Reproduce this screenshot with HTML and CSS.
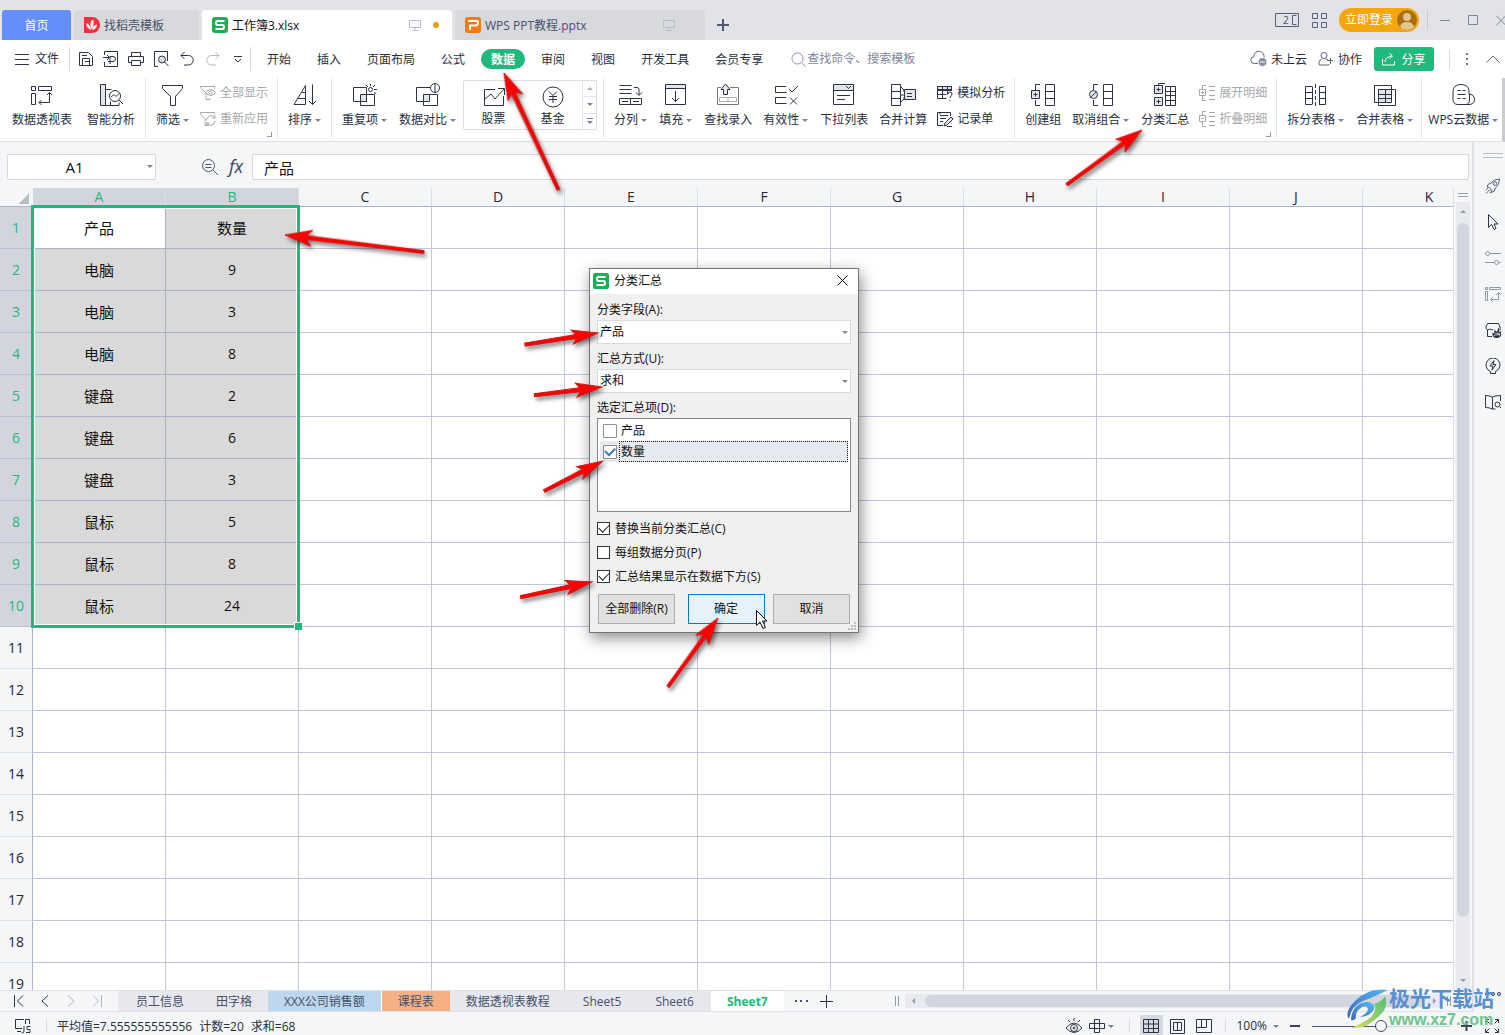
FILE: index.html
```html
<!DOCTYPE html>
<html lang="zh-CN">
<head>
<meta charset="utf-8">
<title>工作簿3.xlsx</title>
<link rel="stylesheet" href="styles.css">
</head>
<body>
<div class="app">
<header class="titlebar">
  <nav class="doc-tabs">
    <button class="doc-tab home"><span>首页</span></button>
    <button class="doc-tab tpl"><svg width="16" height="16" viewBox="0 0 16 16"><path d="M0 0h8a8 8 0 0 1 0 16H0z" fill="#f8303c"/><path d="M7 13C3 11 2 8 2.500 6 5 7 6.500 9 7 13zM7.500 12C5.500 8 6.500 4 9 2.500c1.500 3 .5 6.500-1.500 9.500zM8 13c0-3 2-5 5-5.500 0 3-2 5-5 5.500z" fill="#fff"/></svg><span>找稻壳模板</span></button>
    <button class="doc-tab file active"><svg width="16" height="16" viewBox="0 0 16 16"><rect width="16" height="16" rx="3" fill="#1cb050"/><path d="M12.500 4H5.500Q4 4 4 6t1.500 2h5Q12 8 12 10t-1.500 2H3.500" fill="none" stroke="#fff" stroke-width="2"/></svg><span>工作簿3.xlsx</span><svg class="monitor" width="12" height="12" viewBox="0 0 12 12"><path d="M.5 1.500h11v7H.5zM6 9v2M3 11.500h6"/></svg><i class="dot"></i></button>
    <button class="doc-tab file ppt"><svg width="16" height="16" viewBox="0 0 16 16"><rect width="16" height="16" rx="3" fill="#f47a14"/><path d="M3 4h8.500q1.500 0 1.500 2t-1.500 2.500H5V13" fill="none" stroke="#fff" stroke-width="2"/></svg><span>WPS PPT教程.pptx</span><svg class="monitor" width="12" height="12" viewBox="0 0 12 12"><path d="M.5 1.500h11v7H.5zM6 9v2M3 11.500h6"/></svg></button>
    <button class="new-tab" aria-label="新建"><svg width="12" height="12" viewBox="0 0 12 12"><path d="M6 0v12M0 6h12" stroke="#4a5a7a" stroke-width="2"/></svg></button>
  </nav>
  <div class="win-tools">
    <svg width="25" height="15" viewBox="0 0 25 15"><path d="M.5.5h23v13H.5zM21.500 2.500h-4v9h4"/><text x="8" y="11">2</text></svg>
    <svg width="15" height="15" viewBox="0 0 15 15"><path d="M.5.5h5v5h-5zM9.500.5h5v5h-5zM.5 9.500h5v5h-5zM9.500 9.500h5v5h-5z"/></svg>
    <button class="login"><span>立即登录</span><svg width="20" height="20" viewBox="0 0 20 20"><circle cx="10" cy="10" r="10" fill="#a8700c"/><circle cx="10" cy="7" r="4" fill="#e3c592"/><path d="M3 17q1-5 7-5t7 5q-3 3-7 3t-7-3z" fill="#e3c592"/></svg></button>
    <i class="vline"></i>
    <svg class="wc" width="10" height="11" viewBox="0 0 10 11"><path d="M0 5.500h10"/></svg>
    <svg class="wc" width="10" height="11" viewBox="0 0 10 11"><path d="M.5.5h9v9h-9z"/></svg>
    <svg class="wc" width="9" height="11" viewBox="0 0 9 11"><path d="M0 .5l10 10M0 10.500l10-10"/></svg>
  </div>
</header>

<div class="menubar">
  <button class="file-btn"><svg width="14" height="11" viewBox="0 0 14 11"><path d="M0 .5h14M0 5.500h14M0 10.500h14"/></svg><span>文件</span></button>
  <div class="quick">
    <svg width="16" height="16" viewBox="0 0 16 16"><path d="M1.500 1.500h9l4 4v9h-13zM4.500 14V7.500h7V14M7 10.500h5M4 4.500h5"/></svg>
    <svg width="16" height="16" viewBox="0 0 16 16"><path d="M1.500 4V.5h13v15h-13V11M0 6.500h6M4 4l2.500 2.500L4 9M7 13V5.500h3a2.200 2.200 0 0 1 0 5H5"/></svg>
    <svg width="16" height="16" viewBox="0 0 16 16"><path d="M3.500 5V1.500h9V5M3.500 11.500h-3v-6h15v6h-3M3.500 9.500h9v5h-9z"/></svg>
    <svg width="16" height="16" viewBox="0 0 16 16"><path d="M5 15.500H1.500V.5h13V10"/><circle cx="9" cy="8.500" r="3.500" fill="#dde0e6"/><path d="M11.500 11l4 4"/></svg>
    <svg width="18" height="16" viewBox="-2 0 18 16"><path d="M4.500 1L1 4.500 4.500 8M1 4.500h7.500a4.500 4.500 0 0 1 0 9.500H4"/></svg>
    <svg class="off" width="18" height="16" viewBox="-1 0 18 16"><path d="M9.500 1L13 4.500 9.500 8M13 4.500H5.500a4.500 4.500 0 0 0 0 9.500H10"/></svg>
    <svg width="8" height="8" viewBox="0 0 8 8"><path d="M0 1.500h8M1 4l3 3 3-3"/></svg>
  </div>
  <nav class="menu-tabs">
    <button>开始</button><button>插入</button><button>页面布局</button><button>公式</button><button class="on">数据</button><button>审阅</button><button>视图</button><button>开发工具</button><button>会员专享</button>
  </nav>
  <label class="search"><svg width="15" height="15" viewBox="0 0 15 15"><circle cx="6.500" cy="6.500" r="5.500"/><path d="M10.500 10.500l4 4"/></svg><input type="text" placeholder="查找命令、搜索模板"></label>
  <div class="menu-right">
    <button class="cloud"><svg width="18" height="16" viewBox="0 0 18 16"><path d="M8 12.500H4.500a3.500 3.500 0 0 1-.5-7 5 5 0 0 1 10-.5v2"/><circle cx="12.500" cy="11" r="4.500" class="solid"/><path d="M10 11h5" stroke="#fff"/></svg><span>未上云</span></button>
    <button class="coop"><svg width="16" height="14" viewBox="0 0 16 14"><circle cx="6" cy="3.500" r="3"/><path d="M3.500 7.500Q1 8 1 10.500v1.500q0 1 1 1h8q1 0 1-1M7.500 7q1.500 0 2.500 1M9 8.500h6M12.500 6v6"/></svg><span>协作</span></button>
    <button class="share"><svg width="14" height="13" viewBox="0 0 14 13"><path d="M.5 6v6h12V8M3 9q0-5 7-6M7.500.5l3 2.500-3 3"/></svg><span>分享</span></button>
    <i class="vline"></i>
    <svg class="dots" width="3" height="12" viewBox="0 0 3 12"><path d="M0 0h2v2H0zM0 5h2v2H0zM0 10h2v2H0z"/></svg>
    <svg width="14" height="8" viewBox="0 0 14 8"><path d="M.5 7.500l6.500-6.500 6.500 6.500"/></svg>
  </div>
</div>

<div class="ribbon">
  <div class="group wide">
    <button class="tool"><svg viewBox="0 0 24 24"><path d="M1.500 3.500h4v4h-4zM8.500 3.500h13v4h-13zM1.500 10.500h4v11h-4zM9 19.500h10.500V9.500M11.500 17L9 19.500l2.500 2.500M17 12l2.500-2.500L22 12"/></svg><span>数据透视表</span></button>
    <button class="tool"><svg viewBox="0 0 24 24"><path d="M1.500 1.500h5v21h-5z" class="g"/><path d="M6.500 6.500h6M6.500 22.500h5v-4M11 22.500h9v-3"/><circle cx="16" cy="13" r="5.500"/><path d="M20 17l4 4M12 14l3-2.500 2 2 3-3"/></svg><span>智能分析</span></button>
  </div>
  <div class="group">
    <button class="tool"><svg viewBox="0 0 24 24"><path d="M1.500 2.500h20v3l-7 8v9h-5v-9l-8-8z"/></svg><span class="dd">筛选</span></button>
    <div class="stack off">
      <button><svg viewBox="0 0 16 16"><path d="M6 8L.5 3V1.500h14V4M6 8v6.500h4V13"/><circle cx="10.500" cy="7.500" r="1.500"/><path d="M5.500 7.500q5-6 10 0-5 6-10 0z"/></svg><span>全部显示</span></button>
      <button><svg viewBox="0 0 16 16"><path d="M5 7.500L.5 3V1.500h14V3M5 8v6.500h3.500"/><path d="M6.500 9a4.500 4.500 0 0 1 8-2.500M15 10a4.500 4.500 0 0 1-8 2.500M15 4v3h-3M6.500 15v-3h3"/></svg><span>重新应用</span></button>
    </div>
    <i class="launcher"></i>
  </div>
  <div class="group">
    <button class="tool"><svg viewBox="0 0 24 24"><path d="M1 21.500L12.500 2.500v19zM5 15.500h7.500M9 9.500h3.500M19.500 1.500v20M16 18l3.500 3.500L23 18"/></svg><span class="dd">排序</span></button>
  </div>
  <div class="group">
    <button class="tool"><svg viewBox="0 0 24 24"><path d="M.5 4.500h13v14H.5z"/><path d="M7.500 11.500h6v7h-6z" class="g"/><path d="M14 11.500h7.500v11h-14v-4"/><circle cx="17.500" cy="6.500" r="2"/><path d="M17.500 1v2M13 2l2 2M22 2l-2 2M21 6.500h3M21 9.500l2 1"/></svg><span class="dd">重复项</span></button>
    <button class="tool"><svg viewBox="0 0 24 24"><path d="M14 4.500H.5v14h7"/><path d="M7.500 11.500h6v7h-6z" class="g"/><path d="M14 11.500h7.500v11h-14v-4"/><circle cx="19" cy="5" r="4.500"/><path d="M19 .5v9"/></svg><span class="dd">数据对比</span></button>
    <div class="gallery">
      <button class="tool"><svg viewBox="0 0 24 24"><path d="M13 5.500H2.500v16h19V12M3 15l6-5 4 5 9-10M16 4.500h6.500V11"/></svg><span>股票</span></button>
      <button class="tool"><svg viewBox="0 0 24 24"><circle cx="12" cy="13" r="10"/><path d="M8 7.500l4 4 4-4M8 12.500h8M8 15.500h8M12 11.500V19"/></svg><span>基金</span></button>
      <div class="spin"><i class="up"></i><i></i><i class="more"></i></div>
    </div>
  </div>
  <div class="group">
    <button class="tool"><svg viewBox="0 0 24 24"><path d="M.5 2.500h12M.5 6.500h12M.5 10.500h12M.5 15.500h22v6H.5zM11.500 15.500v6M3 18.500h6M14 18.500h6M15 4.500h3q2 0 2 2V12M17 9.500l3 3 3-3"/></svg><span class="dd">分列</span></button>
    <button class="tool"><svg viewBox="0 0 24 24"><path d="M1.500 1.500h20v4h-20z" class="g"/><path d="M1.500 5.500h20v16h-20zM11.500 8v11M8 15l3.500 3.500L15 15"/></svg><span class="dd">填充</span></button>
    <button class="tool"><svg viewBox="0 0 24 24"><path d="M5 4.500H1.500v17h21v-17H14" stroke="#777"/><path d="M3.500 14.500h17v4h-17zM12 14.500v4" stroke="#aaa"/><path d="M9.500 1L5 6.500h2.500v5h4v-5H14z" class="g"/></svg><span>查找录入</span></button>
    <button class="tool"><svg viewBox="0 0 24 24"><path d="M12 3.500H1.500v6h11M12 14.500H1.500v6h11M15 6l3 3 6-6M16 14.500l7 7M23 14.500l-7 7"/></svg><span class="dd">有效性</span></button>
    <button class="tool"><svg viewBox="0 0 24 24"><path d="M1.500 1.500h20v6h-20z" class="g"/><path d="M1.500 7.500h20v14h-20zM14 3l2.500 2.500L19 3M5 12.500h13M5 16.500h8"/></svg><span>下拉列表</span></button>
    <button class="tool"><svg viewBox="0 0 24 24"><path d="M.5 1.500h9v21h-9zM.5 8.500h9M.5 15.500h9M10 4l3 3v2M10 19l3-3v-2"/><path d="M13.500 6.500h11v10h-11z" class="g"/><path d="M16 10.500h5M16 13.500h5M10 12h3"/></svg><span>合并计算</span></button>
    <div class="stack">
      <button><svg viewBox="0 0 16 16"><path d="M.5 1.500h14v3H.5z" class="g"/><path d="M14.500 6V1.500H.5v12h9M.5 5.500h14M.5 9.500h9M5.500 1.500v12M10.500 1.500v8M11 9q0-2 2-2t2 2-2 3v1M13 15v1"/></svg><span>模拟分析</span></button>
      <button><svg viewBox="0 0 16 16"><path d="M13.500 5V1.500H.5v13H6M3 4.500h8M3 7.500h6M3 10.500h3M3 1.500v2"/><path d="M8 12l6-6 2 2-6 6-3 1z" class="g"/><path d="M10 15.500h5"/></svg><span>记录单</span></button>
    </div>
  </div>
  <div class="group">
    <button class="tool"><svg viewBox="0 0 24 24"><path d="M9 1.500H4.500V7M4.500 17v5.500H9M14.500 1.500h9v21h-9zM14.500 8.500h9M14.500 15.500h9"/><path d="M.5 7.500h8v8h-8z" class="g"/><path d="M2.500 11.500h4M4.500 9.500v4"/></svg><span>创建组</span></button>
    <button class="tool"><svg viewBox="0 0 24 24"><path d="M9 1.500H4.500V7M4.500 17v5.500H9M14.500 1.500h9v21h-9zM14.500 8.500h9M14.500 15.500h9"/><circle cx="4.500" cy="11.500" r="4" class="g"/><path d="M7 9l-5 5"/></svg><span class="dd">取消组合</span></button>
    <button class="tool"><svg viewBox="0 0 24 24"><path d="M12 .5H5.500V2"/><path d="M1.500 2.500h8v8h-8zM1.500 14.500h8v8h-8z" class="g"/><path d="M3.500 6.500h4M5.500 4.500v4M3.500 18.500h4M5.500 16.500v4M12.500 3.500h10v19h-10zM12.500 8.500h10M12.500 12.500h10M12.500 17.500h10M17.500 3.500v19"/></svg><span>分类汇总</span></button>
    <div class="stack off">
      <button><svg viewBox="0 0 16 16"><path d="M7 .5H3.500V4M3.500 11v4.500H7M.5 4.500h6v6h-6zM2 7.500h3M3.500 6v3M10 1.500h6M10 5.500h6M10 10.500h6M10 14.500h6"/></svg><span>展开明细</span></button>
      <button><svg viewBox="0 0 16 16"><path d="M7 .5H3.500V4M3.500 11v4.500H7M.5 4.500h6v6h-6zM2 7.500h3M10 1.500h6M10 5.500h6M10 10.500h6M10 14.500h6"/></svg><span>折叠明细</span></button>
    </div>
    <i class="launcher"></i>
  </div>
  <div class="group tables">
    <button class="tool"><svg viewBox="0 0 24 24"><path d="M8 3.500H1.500v18H8M8.500 3.500v18M1.500 9.500h7M1.500 15.500h7M15 3.500h6.500v18H15M15.500 3.500v18M15 9.500h6.500M15 15.500h6.500"/><path d="M11.500 1v22" stroke-dasharray="4 2"/></svg><span class="dd">拆分表格</span></button>
    <button class="tool"><svg viewBox="0 0 24 24"><path d="M5.500 19.500h-4v-17h17v4"/><path d="M5.500 6.500h13v13h-13z" class="g"/><path d="M5.500 6.500h17v16h-17zM5.500 11.500h13M5.500 15.500h13M12.500 6.500v13"/></svg><span class="dd">合并表格</span></button>
  </div>
  <div class="group last">
    <button class="tool"><svg viewBox="0 0 24 24"><path d="M6 21.500q-5 0-5-5V9q0-7.500 8-7.500 7 0 8 6 0 3 0 4M6 21.500h12q5-1 4.500-6-.5-4-5-4.500v6q0 4.500-4 4.500M5.500 7.500h3M10.500 7.500h3M5.500 11.500h8M5.500 15.500h3M10.500 15.500h3"/></svg><span class="dd">WPS云数据</span></button>
  </div>
</div>

<div class="workspace">
  <main class="book">
    <div class="formula">
      <label class="namebox"><input type="text" value="A1" aria-label="名称框"></label>
      <svg width="18" height="18" viewBox="0 0 18 18"><circle cx="7.500" cy="7.500" r="6"/><path d="M12 12l5 5M4.500 6.500h6M4.500 9.500h6"/></svg>
      <span class="fx">fx</span>
      <input class="fx-input" type="text" value="产品" aria-label="编辑栏">
    </div>
    <div class="sheet">
      <div class="grid">
        <table>
          <thead><tr><th class="corner"></th><th class="sel">A</th><th class="sel">B</th><th>C</th><th>D</th><th>E</th><th>F</th><th>G</th><th>H</th><th>I</th><th>J</th><th>K</th></tr></thead>
          <tbody class="data">
            <tr><th>1</th><td class="cur">产品</td><td>数量</td><td></td><td></td><td></td><td></td><td></td><td></td><td></td><td></td><td></td></tr>
            <tr><th>2</th><td>电脑</td><td>9</td><td></td><td></td><td></td><td></td><td></td><td></td><td></td><td></td><td></td></tr>
            <tr><th>3</th><td>电脑</td><td>3</td><td></td><td></td><td></td><td></td><td></td><td></td><td></td><td></td><td></td></tr>
            <tr><th>4</th><td>电脑</td><td>8</td><td></td><td></td><td></td><td></td><td></td><td></td><td></td><td></td><td></td></tr>
            <tr><th>5</th><td>键盘</td><td>2</td><td></td><td></td><td></td><td></td><td></td><td></td><td></td><td></td><td></td></tr>
            <tr><th>6</th><td>键盘</td><td>6</td><td></td><td></td><td></td><td></td><td></td><td></td><td></td><td></td><td></td></tr>
            <tr><th>7</th><td>键盘</td><td>3</td><td></td><td></td><td></td><td></td><td></td><td></td><td></td><td></td><td></td></tr>
            <tr><th>8</th><td>鼠标</td><td>5</td><td></td><td></td><td></td><td></td><td></td><td></td><td></td><td></td><td></td></tr>
            <tr><th>9</th><td>鼠标</td><td>8</td><td></td><td></td><td></td><td></td><td></td><td></td><td></td><td></td><td></td></tr>
            <tr><th>10</th><td>鼠标</td><td>24</td><td></td><td></td><td></td><td></td><td></td><td></td><td></td><td></td><td></td></tr>
          </tbody>
          <tbody>
            <tr><th>11</th><td></td><td></td><td></td><td></td><td></td><td></td><td></td><td></td><td></td><td></td><td></td></tr>
            <tr><th>12</th><td></td><td></td><td></td><td></td><td></td><td></td><td></td><td></td><td></td><td></td><td></td></tr>
            <tr><th>13</th><td></td><td></td><td></td><td></td><td></td><td></td><td></td><td></td><td></td><td></td><td></td></tr>
            <tr><th>14</th><td></td><td></td><td></td><td></td><td></td><td></td><td></td><td></td><td></td><td></td><td></td></tr>
            <tr><th>15</th><td></td><td></td><td></td><td></td><td></td><td></td><td></td><td></td><td></td><td></td><td></td></tr>
            <tr><th>16</th><td></td><td></td><td></td><td></td><td></td><td></td><td></td><td></td><td></td><td></td><td></td></tr>
            <tr><th>17</th><td></td><td></td><td></td><td></td><td></td><td></td><td></td><td></td><td></td><td></td><td></td></tr>
            <tr><th>18</th><td></td><td></td><td></td><td></td><td></td><td></td><td></td><td></td><td></td><td></td><td></td></tr>
            <tr><th>19</th><td></td><td></td><td></td><td></td><td></td><td></td><td></td><td></td><td></td><td></td><td></td></tr>
          </tbody>
        </table>
        <div class="selection"></div>
      </div>
      <div class="vscroll"><i class="split"></i><div class="vtrack"><i class="tri up"></i><i class="vthumb"></i><i class="tri"></i></div></div>
    </div>
    <div class="sheetbar">
      <div class="sheet-nav">
        <svg width="10" height="12" viewBox="0 0 10 12"><path d="M.5 0v12M9 .5L3.500 6 9 11.500"/></svg>
        <svg width="8" height="12" viewBox="0 0 8 12"><path d="M7 .5L1 6l6 5.500"/></svg>
        <svg class="off" width="8" height="12" viewBox="0 0 8 12"><path d="M1 .5L7 6l-6 5.500"/></svg>
        <svg class="off" width="10" height="12" viewBox="0 0 10 12"><path d="M9.500 0v12M1 .5L6.500 6 1 11.500"/></svg>
      </div>
      <nav class="sheet-tabs">
        <button>员工信息</button><button>田字格</button><button class="blue">XXX公司销售额</button><button class="orange">课程表</button><button>数据透视表教程</button><button class="latin">Sheet5</button><button class="latin">Sheet6</button><button class="on">Sheet7</button>
      </nav>
      <svg class="ell" width="13" height="3" viewBox="0 0 13 3"><path d="M0 0h2v2H0zM5 0h2v2H5zM11 0h2v2h-2z"/></svg>
      <svg class="add" width="13" height="13" viewBox="0 0 13 13"><path d="M6.500 0v13M0 6.500h13"/></svg>
      <svg class="grip" width="4" height="10" viewBox="0 0 4 10"><path d="M.5 0v10M3.500 0v10"/></svg>
      <div class="hscroll"><i class="tri left"></i><i class="hthumb"></i><i class="tri right"></i></div>
      <svg class="grip end" width="4" height="10" viewBox="0 0 4 10"><path d="M.5 0v10M3.500 0v10"/></svg>
    </div>
  </main>
  <aside class="side">
    <svg class="handle" width="20" height="5" viewBox="0 0 20 5"><path d="M0 .5h20M0 4.500h20"/></svg>
    <svg viewBox="0 0 16 16"><path d="M4.500 9.500L2 9q0-3 4-4 3-4 8.500-4 0 6-4 9-.5 4-4 4.500l-.5-3zM1 12l2-2M1 15.500l4-4M5 15l2-2"/><circle cx="10" cy="5.500" r="1.800"/></svg>
    <svg class="dark" viewBox="0 0 16 16"><path d="M3.500.5v13l3-3 2.500 5 2-1-2-4.500h4z"/></svg>
    <svg class="pale" viewBox="0 0 16 16"><circle cx="2.500" cy="3.500" r="2"/><path d="M5 3.500h11M0 12.500h9"/><circle cx="11.500" cy="12.500" r="2"/><path d="M14 12.500h2"/></svg>
    <svg class="pale" viewBox="0 0 16 16"><path d="M.5 1.500h2v2h-2zM4.500 1.500h11v2h-11zM.5 5.500h2v9h-2zM6 13.500h7.500V6.500M8 11l-2.500 2.500L8 16M11 9l2.500-2.500L16 9"/></svg>
    <svg class="dark" viewBox="0 0 16 16"><path d="M2.500 8v6.500H7M8 7.500q-1 1-2 0t-2 0-3-1V5l1.500-3.500h11L15 5v3"/><path d="M12 15.500q-4 0-4-4l2 1V9l2 2 1.500-3.500L14 11l2-1q0 5.500-4 5.500zM12 15.500V12M10 13.500l2 2 2-2.500" stroke-width="1.200"/></svg>
    <svg class="dark" viewBox="0 0 16 16"><path d="M5.500 13.500a7 7 0 1 1 5 0v2h-5zM9 2.500L5 8h3l-1 4 4-5.500H8z"/></svg>
    <svg class="dark" viewBox="0 0 16 16"><path d="M7.500 3Q4 1.500.5 1.500v12q4 0 7 1.500zq3-1.500 8-1.500V7M7.500 15h3"/><circle cx="12.500" cy="10.500" r="2.500"/><path d="M14.500 12.500L16 14"/></svg>
    <svg class="dark rings" viewBox="0 0 18 6"><circle cx="3" cy="3" r="1.500"/><circle cx="9" cy="3" r="1.500"/><circle cx="15" cy="3" r="1.500"/></svg>
  </aside>
</div>

<footer class="status">
  <svg class="macro" width="17" height="16" viewBox="0 0 17 16"><path d="M9 1.500H.5v9H7M2 13.500h4M10.500 6V1.500h4V6M9 8v5q0 2-2.500 2M15.500 8.500H12v3h3v3h-4"/></svg>
  <i class="vline"></i>
  <span>平均值=7.555555555556</span><span>计数=20</span><span>求和=68</span>
  <div class="status-right">
    <svg width="18" height="16" viewBox="0 0 18 16"><path d="M1 10q8-10 16 0-8 9-16 0zM9 0v3M3 2l2 2M15 2l-2 2"/><circle cx="9" cy="10" r="3.500"/><circle cx="9" cy="10" r="1"/></svg>
    <span class="dd"><svg width="16" height="14" viewBox="0 0 16 14"><path d="M5.500.5h5v13h-5zM.5 4.500h15v5H.5z"/></svg></span>
    <i class="vline"></i>
    <button class="view on" aria-label="普通视图"><svg width="17" height="14" viewBox="0 0 17 14"><path d="M.5.5h15v13H.5zM.5 5h15M.5 9.500h15M5.500.5v13M10.500.5v13"/></svg></button>
    <button class="view" aria-label="页面布局"><svg width="15" height="15" viewBox="0 0 15 15"><path d="M.5.5h14v14H.5zM3.500 3.500h8v8h-8zM7.500 3.500v8"/></svg></button>
    <button class="view" aria-label="分页预览"><svg width="16" height="14" viewBox="0 0 16 14"><path d="M.5.500h15v13H.5zM.5 8.500h10V.5M5.500.5v8"/></svg></button>
    <i class="vline"></i>
    <span class="dd pct">100%</span>
    <svg class="pm" width="10" height="12" viewBox="0 0 10 12"><path d="M0 6h10"/></svg>
    <input class="zoom" type="range" min="0" max="100" value="50" aria-label="缩放">
    <svg class="pm" width="11" height="12" viewBox="0 0 11 12"><path d="M0 6h11M5.500 1v10"/></svg>
    <svg width="14" height="14" viewBox="0 0 14 14"><path d="M.5 4V.5H4M.5.5l4 4M10 .5h3.500V4M13.500.5l-4 4M.5 10v3.500H4M.5 13.500l4-4M13.500 10v3.500H10M13.500 13.500l-4-4"/></svg>
  </div>
</footer>
</div>

<section class="dialog" role="dialog" aria-labelledby="dlg-title">
  <header><svg width="16" height="16" viewBox="0 0 16 16"><rect width="16" height="16" rx="2" fill="#1cb050"/><path d="M12.500 4H5.500Q4 4 4 6t1.500 2h5Q12 8 12 10t-1.500 2H3.500" fill="none" stroke="#fff" stroke-width="2"/></svg><h1 id="dlg-title">分类汇总</h1><button class="close" aria-label="关闭"><svg width="11" height="11" viewBox="0 0 11 11"><path d="M.5.5l10 10M.5 10.500l10-10"/></svg></button></header>
  <form>
    <label class="cap" for="field">分类字段(A):</label>
    <div class="select"><select id="field"><option>产品</option></select></div>
    <label class="cap" for="method">汇总方式(U):</label>
    <div class="select"><select id="method"><option>求和</option></select></div>
    <span class="cap">选定汇总项(D):</span>
    <div class="items">
      <label><input type="checkbox"><span>产品</span></label>
      <label class="focus"><input type="checkbox" checked><span>数量</span></label>
    </div>
    <label class="opt"><input type="checkbox" checked><span>替换当前分类汇总(C)</span></label>
    <label class="opt"><input type="checkbox"><span>每组数据分页(P)</span></label>
    <label class="opt"><input type="checkbox" checked><span>汇总结果显示在数据下方(S)</span></label>
    <div class="actions"><button type="button">全部删除(R)</button><button type="button" class="ok">确定</button><button type="button">取消</button></div>
  </form>
  <svg class="resize" width="8" height="8" viewBox="0 0 8 8"><path d="M6 0h2v2H6zM3 3h2v2H3zM6 3h2v2H6zM0 6h2v2H0zM3 6h2v2H3zM6 6h2v2H6z"/></svg>
</section>

<svg class="marks">
  <g class="arrows">
    <path transform="translate(504 73) rotate(65)" d="M0 0L27-8 22-2 129-1.500V1.500L22 2 27 8z"/>
    <path transform="translate(1142 130) rotate(144)" d="M0 0L27-8 22-2 93-1.500V1.500L22 2 27 8z"/>
    <path transform="translate(285 235) rotate(7)" d="M0 0L27-8 22-2 140-1.500V1.500L22 2 27 8z"/>
    <path transform="translate(598 333) rotate(171)" d="M0 0L26-7 22-2 74-1.500V1.500L22 2 26 7z"/>
    <path transform="translate(602 387) rotate(173)" d="M0 0L26-7 22-2 68-1.500V1.500L22 2 26 7z"/>
    <path transform="translate(603 461) rotate(153)" d="M0 0L26-7 22-2 66-1.500V1.500L22 2 26 7z"/>
    <path transform="translate(592 582) rotate(168)" d="M0 0L26-7 22-2 73-1.500V1.500L22 2 26 7z"/>
    <path transform="translate(718 618) rotate(126)" d="M0 0L27-8 22-2 85-1.500V1.500L22 2 27 8z"/>
  </g>
  <path d="M756.500 610.500v15l3.500-3.500 3 6.500 2.500-1-3-6.500h4.500z" fill="#fff" stroke="#111"/>
</svg>
<div class="watermark">
  <svg width="42" height="40" viewBox="0 0 42 40"><defs><linearGradient id="wa" x1="0" y1="1" x2="1" y2="0"><stop offset="0" stop-color="#3a68b8"/><stop offset="1" stop-color="#55b8ee"/></linearGradient><linearGradient id="wb" x1="0" y1="1" x2="1" y2="0"><stop offset="0" stop-color="#d8dc58"/><stop offset="1" stop-color="#4fbf78"/></linearGradient></defs><path d="M41 1Q22-2 8 12-3 23 2 30q2-13 14-18Q27 8 41 1z" fill="url(#wa)"/><path d="M4 31Q5 15 19 13q9 0 8 7-3 7-14 8 8-4 8-8-1-4-6-2-7 4-6 11-2 3-5 2z" fill="url(#wa)"/><path d="M27 15q8-2 11-8 4 12-6 20-8 8-16 11-6 1-12 1 15-6 21-12 5-6 2-12z" fill="url(#wb)"/></svg>
  <div><strong>极光下载站</strong><a href="#">www.xz7.com</a></div>
</div>
</body>
</html>
```
FILE: styles.css
```css
* { box-sizing: border-box; }
html, body { height: 100%; }
body {
  margin: 0;
  position: relative;
  overflow: hidden;
  font: 12px/18px "Open Sans", "Noto Sans CJK SC", sans-serif;
  color: #262f42;
  background: #f5f6f8;
}
button, input, select { font: inherit; color: inherit; margin: 0; padding: 0; }
button { border: 0; background: none; white-space: nowrap; }
svg { flex: none; fill: none; stroke: #2b3346; display: block; }
svg .g { fill: #e3e5ea; }
.app { height: 100vh; display: flex; flex-direction: column; }
.vline { flex: none; width: 1px; background: #d8dade; }

/* title bar */
.titlebar { flex: none; height: 40px; background: #e2e3e7; display: flex; justify-content: space-between; }
.doc-tabs { display: flex; align-items: flex-end; gap: 3px; padding-left: 2px; }
.doc-tab { height: 30px; border-radius: 3px 3px 0 0; background: #d8d9dc; color: #45506a; display: flex; align-items: center; gap: 4px; padding: 0 10px; }
.doc-tab span { padding-top: 2px; }
.doc-tab svg { stroke: none; }
.doc-tab.home { width: 69px; background: #638efc; color: #fff; justify-content: center; }
.doc-tab.tpl { width: 125px; }
.doc-tab.file { width: 250px; }
.doc-tab.active { background: #fff; color: #111; }
.doc-tab .monitor { stroke: #b4bdd3; margin-left: auto; }
.doc-tab .dot { width: 6px; height: 6px; border-radius: 3px; background: #e79b08; margin: 0 3px 0 8px; }
.doc-tab.ppt .monitor { margin-right: 20px; }
.new-tab { width: 30px; height: 30px; display: grid; place-items: center; }
.win-tools { display: flex; align-items: center; }
.win-tools > svg { stroke: #55617c; margin-right: 12px; }
.win-tools text { font-size: 10px; fill: #45506a; stroke: none; }
.login { width: 80px; height: 24px; border-radius: 12px; background: #f5a60c; color: #fff; display: flex; align-items: center; justify-content: space-between; padding: 0 2px 0 6px; }
.login svg { stroke: none; }
.win-tools .vline { height: 20px; margin: 0 12px 0 8px; background: #c8cad0; }
.win-tools .wc { stroke: #7d879c; margin-right: 18px; }
.win-tools .wc:last-child { margin-right: 0; }

/* menu bar */
.menubar { flex: none; height: 38px; background: #fff; display: flex; align-items: center; }
.file-btn { display: flex; align-items: center; gap: 6px; padding: 0 10px 0 15px; height: 24px; border-right: 1px solid #d8dade; }
.quick { display: flex; align-items: center; gap: 9px; padding: 0 8px; height: 24px; border-right: 1px solid #d8dade; }
.quick svg:last-child { margin-left: 2px; }
.quick .off, .sheet-nav .off { stroke: #b3b6bd; }
.menu-tabs { display: flex; gap: 6px; padding-left: 6px; }
.menu-tabs button { height: 20px; padding: 2px 10px 0; border-radius: 10px; }
.menu-tabs .on { background: #20b97c; color: #fff; font-weight: bold; }
.search { display: flex; align-items: center; gap: 1px; margin-left: 18px; }
.search svg { stroke: #8a95ab; }
.search input { border: 0; width: 130px; outline: 0; }
.search input::placeholder { color: #7c879d; opacity: 1; }
.menu-right { margin-left: auto; display: flex; align-items: center; padding-right: 5px; }
.menu-right > button { display: flex; align-items: center; }
.menu-right span { padding-top: 2px; }
.menu-right svg { stroke: #5a6478; }
.cloud { gap: 3px; margin-right: 11px; }
.cloud .solid { fill: #8790a3; stroke: #fff; }
.coop { gap: 4px; margin-right: 12px; }
.menu-right .share { width: 60px; height: 24px; border-radius: 3px; background: #20b97c; color: #fff; gap: 5px; justify-content: center; }
.menu-right .share svg { stroke: #fff; }
.menu-right .vline { height: 20px; margin: 0 16px 0 15px; }
.menu-right .dots { fill: #6d7688; stroke: none; margin-right: 17px; }

/* ribbon */
.ribbon { flex: none; height: 64px; background: #fff; border-bottom: 1px solid #dfe0e3; display: flex; position: relative; overflow: hidden; border-right: 3px solid #c9cbd1; }
.group { position: relative; display: flex; gap: 11px; padding: 1px 9px 1px 10px; height: 60px; flex: none; border-right: 1px solid #e6e7ea; }
.group.wide { gap: 15px; padding: 1px 10px 1px 12px; }
.group.tables { padding-right: 7px; }
.group.last { border: 0; padding: 1px 0 1px 6px; }
.tool { display: flex; flex-direction: column; align-items: center; padding-top: 4px; gap: 4px; height: 56px; }
.tool svg { width: 24px; height: 24px; overflow: visible; }
.dd { display: flex; align-items: center; }
.dd::after { content: ""; border: 3px solid transparent; border-top-color: #78849b; border-bottom-width: 0; margin: 0 1px 0 3px; }
.stack { display: flex; flex-direction: column; gap: 8px; padding-top: 5px; margin-left: -1px; }
.stack button { display: flex; gap: 4px; align-items: center; }
.stack svg { width: 16px; height: 16px; overflow: visible; }
.stack.off { color: #a6a8ad; }
.stack.off svg { stroke: #a6a8ad; }
.launcher { position: absolute; right: 5px; bottom: 1px; width: 5px; height: 5px; border: solid #8f9ab0; border-width: 0 1px 1px 0; }
.gallery { display: flex; height: 50px; margin: 1px -3px 0 -5px; border: 1px solid #dcdee2; border-radius: 2px; }
.gallery .tool { width: 59px; padding-top: 3px; gap: 2px; }
.gallery .spin { width: 14px; border-left: 1px solid #e3e5e9; display: flex; flex-direction: column; }
.spin i { flex: 1; display: grid; place-content: center; border-bottom: 1px solid #e3e5e9; }
.spin i:last-child { border: 0; }
.spin i::after { content: ""; border: 3px solid transparent; border-top-color: #78849b; border-bottom-width: 0; }
.spin .up::after { border: 3px solid transparent; border-bottom-color: #a9b0be; border-top-width: 0; }
.spin .more::before { content: ""; height: 1px; background: #78849b; margin-bottom: 2px; }

/* workspace */
.workspace { flex: 1; min-height: 0; display: flex; }
.book { flex: 1; min-width: 0; display: flex; flex-direction: column; }
.formula { flex: none; height: 46px; padding: 12px 3px 8px 7px; display: flex; align-items: center; }
.formula input { height: 26px; border: 1px solid #d5d7dc; border-radius: 2px; background: #fff; font-size: 15px; color: #111; }
.namebox { position: relative; margin-right: 45px; }
.namebox input { width: 149px; text-align: center; padding-right: 14px; }
.namebox::after, .select::after { content: ""; position: absolute; right: 3px; top: 11px; border: 3px solid transparent; border-top-color: #78849b; border-bottom-width: 0; }
.formula svg { stroke: #4c566c; }
.fx { font: italic 18px/20px "Open Sans", sans-serif; color: #3e475c; width: 23px; margin: 0 0 2px 10px; }
.formula .fx-input { flex: 1; padding: 0 11px; }
.sheet { flex: 1; min-height: 0; display: flex; }
.grid { flex: 1; min-width: 0; position: relative; overflow: hidden; border-right: 1px solid #dfe1e6; }
.grid table { table-layout: fixed; width: 1496px; border-collapse: separate; border-spacing: 0; background: #fff; }
.grid th { font-size: 14px; font-weight: normal; padding: 0; background: #f5f6f8; color: #222a38; }
.grid thead th { height: 19px; line-height: 18px; border-right: 1px solid #dcdfe8; border-bottom: 1px solid #aab3cf; }
.grid thead .corner { width: 33px; border-right: 0; background: linear-gradient(135deg, #f5f6f8 50%, #b9bcc2 50%) 18px 6px / 11px 10px no-repeat #f5f6f8; }
.grid thead .sel, .grid .data th { background: #d2d5dd; color: #20b97c; }
.grid tbody th { height: 42px; border-right: 1px solid #aab3cf; border-bottom: 1px solid #dfe2ea; }
.grid .data th { border-bottom-color: #bcc2d0; }
.grid td { padding: 0; text-align: center; font-size: 15px; color: #111; border-right: 1px solid #bfc7dc; border-bottom: 1px solid #bfc7dc; }
.data td:nth-child(-n+3) { background: #d9d9d9; border-color: #a9b1c4; }
.data td:nth-child(3) { font-size: 14px; }
.data tr:first-child td:nth-child(3) { font-size: 15px; }
.data td.cur { background: #fff; }
.selection { position: absolute; left: 31px; top: 17px; width: 269px; height: 423px; border: 3px solid #20b97c; }
.selection::before { content: ""; position: absolute; inset: 0; border: 1px solid #fff; }
.selection::after { content: ""; position: absolute; right: -5px; bottom: -5px; width: 7px; height: 7px; background: #20b97c; border: solid #fff; border-width: 1px 0 0 1px; }
.vscroll { width: 18px; display: flex; flex-direction: column; align-items: center; }
.split { width: 10px; height: 4px; margin: 5px 0; border: solid #98a1b5; border-width: 1px 0; }
.vtrack { flex: 1; width: 14px; background: #e8eaef; display: flex; flex-direction: column; align-items: center; padding: 8px 0; gap: 10px; }
.vthumb { width: 12px; height: 694px; flex: 0 1 694px; border-radius: 6px; background: #d2d5dd; }
.tri { flex: none; border: 3px solid transparent; border-top-color: #8f9ab0; border-bottom-width: 0; }
.tri.up { border: 3px solid transparent; border-bottom-color: #8f9ab0; border-top-width: 0; }
.vtrack .tri:last-child { margin-top: auto; }

/* sheet tabs */
.sheetbar { flex: none; height: 22px; border-top: 1px solid #dfe1e6; border-bottom: 1px solid #dfe1e6; display: flex; align-items: center; }
.sheet-nav { width: 118px; flex: none; display: flex; justify-content: space-between; padding: 0 16px 0 14px; }
.sheet-tabs { display: flex; align-self: stretch; background: #e6e8ee; padding-left: 2px; }
.sheet-tabs button { padding: 2px 16px 0; color: #45506a; }
.sheet-tabs .blue { background: #bdd7ee; border-right: 1px solid #fff; }
.sheet-tabs .orange { background: #f4b084; }
.sheet-tabs .latin { padding: 2px 17px 0; }
.sheet-tabs .on { background: #fff; color: #20b97c; font-weight: bold; }
.ell { fill: #4a566e; stroke: none; margin-left: 11px; }
.add { margin-left: 12px; }
.grip { stroke: #8f9ab0; margin-left: auto; }
.grip.end { margin: 0 21px 0 4px; }
.hscroll { flex: 0 1 538px; height: 14px; margin-left: 6px; background: #e8eaef; display: flex; align-items: center; gap: 10px; padding: 0 7px; }
.hthumb { flex: 1; height: 12px; border-radius: 6px; background: #d2d5dd; }
.tri.left { border: 3px solid transparent; border-right-color: #8f9ab0; border-left-width: 0; }
.tri.right { border: 3px solid transparent; border-left-color: #8f9ab0; border-right-width: 0; }

/* side tools */
.side { flex: none; width: 33px; border-left: 2px solid #dfe1e7; display: flex; flex-direction: column; align-items: center; gap: 20px; padding: 11px 0 15px 6px; }
.side svg { width: 16px; height: 16px; stroke: #55617c; }
.side .handle { width: 20px; height: 5px; stroke: #b9bdc6; }
.side .dark { stroke: #2b3346; }
.side .pale { stroke: #8f98aa; }
.side .rings { width: 18px; height: 6px; margin-top: auto; }

/* status bar */
.status { flex: none; height: 23px; padding-top: 5px; display: flex; align-items: center; gap: 7px; padding-left: 15px; }
.status .vline { height: 14px; }
.status .macro { margin-right: 7px; }
.status > .vline { margin-right: 3px; }
.status > span { padding-top: 2px; }
.status-right { margin-left: auto; display: flex; align-items: center; padding-right: 6px; }
.status-right > .dd { margin: 0 14px 0 6px; }
.status-right > .vline { margin-right: 10px; }
.status-right .view { width: 23px; height: 22px; margin-right: 3px; display: grid; place-items: center; }
.status-right .view.on { background: #d6dae1; }
.view + .vline { margin-left: 7px; }
.status-right > .pct { margin: 0 10px 0 0; gap: 3px; }
.pm { stroke: #39445a; stroke-width: 2; }
.zoom { appearance: none; width: 138px; height: 12px; margin: 0 11px 0 12px; background: linear-gradient(90deg, #4a566e 50%, #d0d4dc 50%) center / 100% 1px no-repeat; }
.zoom::-webkit-slider-thumb { appearance: none; width: 12px; height: 12px; border: 1px solid #444c5c; border-radius: 6px; background: #f5f6f8; }
.zoom + .pm { margin-right: 13px; }

/* subtotal dialog */
.dialog { position: absolute; left: 589px; top: 268px; width: 270px; background: #f0f0f0; border: 1px solid #757575; color: #111; box-shadow: 2px 5px 14px rgba(0, 0, 0, .45); }
.dialog header { height: 25px; background: #fff; display: flex; align-items: center; padding: 0 10px 2px 3px; gap: 5px; }
.dialog header svg { stroke: none; }
.dialog h1 { margin: 0; font: inherit; }
.dialog .close { margin-left: auto; }
.dialog .close svg { stroke: #111; }
.dialog form { display: flex; flex-direction: column; padding: 1px 7px 8px; }
.cap { height: 25px; padding-top: 6px; }
.select { position: relative; }
.dialog select { appearance: none; width: 100%; height: 24px; border: 1px solid #d8dade; border-radius: 0; background: #fff; padding: 0 2px; display: block; }
.items { height: 94px; border: 1px solid #828790; background: #fff; padding: 1px 2px; display: flex; flex-direction: column; }
.items label { display: flex; align-items: center; height: 21px; padding-left: 3px; gap: 2px; }
.items span { flex: 1; height: 21px; line-height: 19px; border: 1px dotted transparent; padding-left: 1px; }
.items .focus, .items .focus span { background: #e6eaf0; }
.items .focus span { border-color: #111; }
.dialog input { appearance: none; flex: none; width: 13px; height: 13px; border: 1px solid #333; background: #fff; display: grid; place-items: center; }
.items input { width: 14px; height: 14px; border-color: #8c8f96; border-radius: 1px; }
.dialog input:checked::after { content: ""; width: 9px; height: 5px; border: solid #222; border-width: 0 0 1px 1px; transform: rotate(-45deg); margin-bottom: 3px; }
.dialog .items input:checked::after { width: 8px; height: 5px; border-color: #4a78c8; border-width: 0 0 2px 2px; }
.opt { display: flex; align-items: center; gap: 5px; height: 24px; }
.opt span { padding-top: 2px; }
.items + .opt { margin-top: 4px; }
.actions { display: grid; grid-template-columns: 77px 77px 77px; justify-content: space-between; padding: 0 1px; margin-top: 6px; }
.actions button { height: 30px; border: 1px solid #adadad; background: #e1e1e1; }
.actions .ok { border-color: #0078d7; background: #e5f1fb; margin: 0 -2px 0 2px; }
.resize { position: absolute; right: 2px; bottom: 2px; fill: #bdbdbd; stroke: none; }

/* pointer, call-out arrows and site badge */
.marks { position: absolute; inset: 0; width: 100%; height: 100%; pointer-events: none; stroke: none; }
.arrows { fill: #fd0000; stroke: #d01818; stroke-width: 1px; filter: drop-shadow(2px 3px 2px rgba(0, 0, 0, .5)); }
.watermark { position: absolute; right: 11px; bottom: 6px; display: flex; gap: 0; align-items: flex-start; }
.watermark svg { stroke: none; margin-top: 2px; }
.watermark div { display: flex; flex-direction: column; }
.watermark strong { font-size: 21px; line-height: 25px; margin-top: -1px; color: #5690d2; }
.watermark a { font: bold 16px/18px "Liberation Sans", "Noto Sans CJK SC", sans-serif; color: #6cc58b; text-decoration: none; }
```
